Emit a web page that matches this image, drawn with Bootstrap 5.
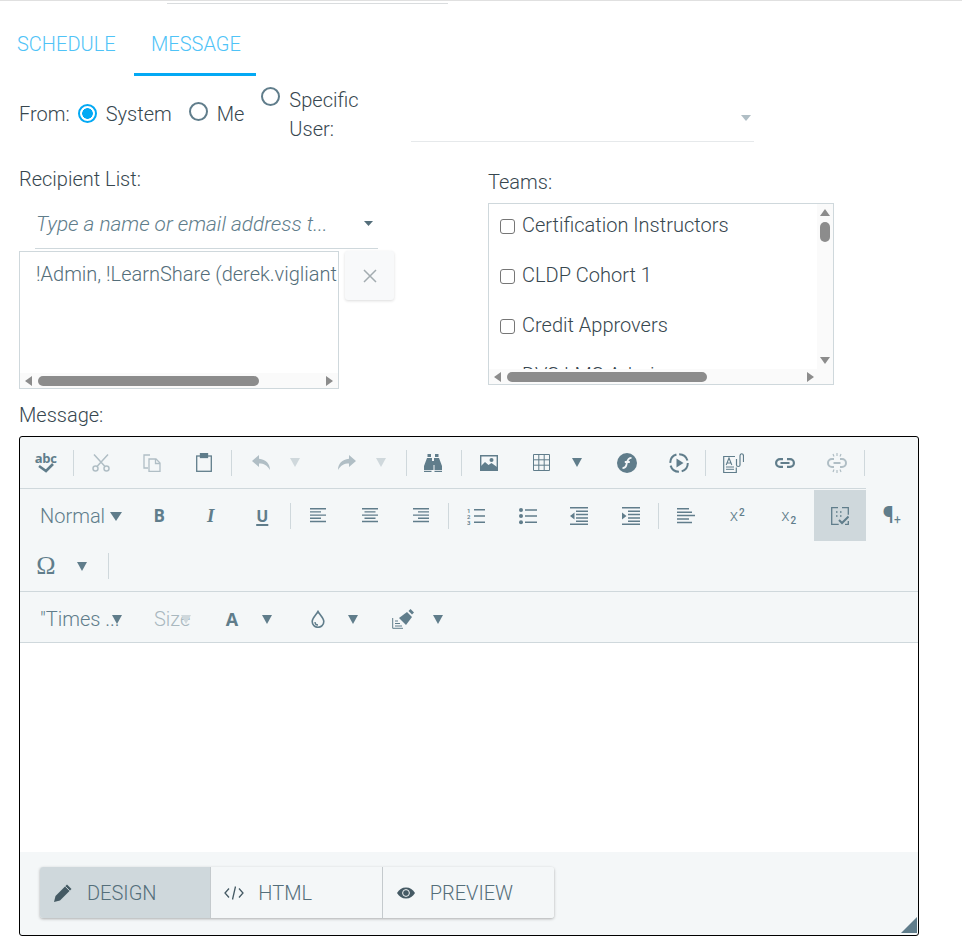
<!DOCTYPE html>
<html lang="en">
<head>
<meta charset="utf-8">
<title>Message</title>
<link href="https://cdn.jsdelivr.net/npm/bootstrap@5.3.0/dist/css/bootstrap.min.css" rel="stylesheet">
<style>
html,body{overflow:hidden}
body{font-family:Roboto,"Liberation Sans",sans-serif;font-weight:300;font-size:20px;line-height:27px;color:#37474f;background:#fff}
.top-rule{height:1px;background:#e0e0e0}
.top-rule2{height:1px;background:#d9dcde;width:281px;margin:2px 0 0 167px}
.tabbar{margin-top:0;height:72px;align-items:flex-end}
.tab-lnk{display:block;height:47px;line-height:30px;color:#4fc3f7;text-decoration:none;text-transform:uppercase;border-bottom:3px solid transparent}
.tab-a{width:134px;padding-left:17px}
.tab-b{width:122px;padding-left:17px;border-bottom-color:#03a9f4}
.from-row{height:89px;padding-left:19px}
.from-lbl{margin-top:25px}
.rd{appearance:none;width:19px;height:19px;margin:0;border:2px solid #607d8b;border-radius:50%;background:#fff;flex:none;display:block}
.rd:checked{border-color:#03a9f4;background:radial-gradient(circle,#03a9f4 0 5px,#fff 5.6px)}
.opt1{margin-left:8px;margin-top:25px}
.opt1 .rd{margin-top:3px}
.opt1 span{margin-left:9px}
.opt2{margin-left:17px;margin-top:25px}
.opt2 .rd{margin-top:1px}
.opt2 span{margin-left:9px}
.opt3{margin-left:17px;margin-top:10px}
.opt3 .rd{margin-top:1px}
.opt3 span{margin-left:9px;width:80px;line-height:29px;color:#37474f}
.user-sel{margin:25px 0 0 42px;width:343px;height:41px;border-bottom:1px solid #e6e9eb;padding-right:3px;padding-top:14px}
.main-cols{height:236px;padding-left:19px}
.left-col{width:469px}
.lbl-text{line-height:29px}
.combo{margin-left:16px;margin-top:10px;width:343px;height:45px;border-bottom:1px solid #cfd8dc;padding:7px 5px 0 1px}
.combo i{color:#607d8b;font-weight:300;font-size:20.8px;white-space:nowrap}
.combo .cr{margin-top:10px}
.list-wrap{margin-top:2px}
.rcpt{width:320px;height:138px;border:1px solid #cfd8dc}
.rcpt-text{height:121px;padding:9px 0 0 16px;white-space:nowrap;overflow:hidden;color:#546e7a}
.close-btn{width:49px;height:49px;margin-left:6px;padding:0;border:0;background:#f8f9fa;border-radius:3px;box-shadow:0 1px 3px rgba(0,0,0,.14);color:#a3acb0}
.hbar{height:15px;background:#fafafa;padding:0 5px;flex:none}
.thumb-h{height:10px;border-radius:5px;background:#8c8c8c}
.thumb-1{width:221px;margin-left:5px}
.thumb-2{width:200px;margin-left:5px}
.arrow-end{margin-right:14px}
.sp{flex:1}
.teams{margin-top:3px}
.teams-box{width:346px;height:182px;margin-top:6px;border:1px solid #cfd8dc}
.teams-main{height:165px}
.teams-list{width:329px;overflow:hidden;padding:0 0 0 11px}
.team-row{height:50px;column-gap:7px}
.team-row:first-child{margin-top:-4px}
.team-row span{line-height:27px}
.team-cb{appearance:none;width:15px;height:15px;margin:0;border:1.4px solid #767676;border-radius:3px;background:#fff;flex:none;transform:translateY(1px)}
.vbar{width:16px;background:#fafafa;padding:5px 0 5px;align-items:center}
.thumb-v{width:10px;height:20px;border-radius:5px;background:#8c8c8c;margin-top:5px}
.msg-lbl{padding-left:19px}
.editor{width:900px;height:500px;margin:6px 0 0 19px;border:1px solid #000;border-radius:3px;background:#f4f7f8;overflow:hidden}
.tb1{height:52px;width:846px;border-bottom:1px solid #cfd8dc}
.tb2{height:52px;padding-top:1px}
.tb3{height:51px;border-bottom:1px solid #cfd8dc}
.tb4{height:51px;border-bottom:1px solid #cfd8dc;padding-top:4px}
.tool{width:51.5px;height:100%;display:flex;align-items:center;justify-content:center;color:#607d8b;flex:none;font-weight:400}
.tb-sep{width:1px;height:26px;background:#cfd8dc;margin-left:2px;margin-right:.5px;flex:none}
.sep-x{margin-left:2px;margin-right:1.5px}
.sep-y{margin-left:1px;margin-right:1.5px}
.sep-z{margin-left:0;margin-right:2.5px}
.spl{width:85.5px;height:100%;display:flex;align-items:center;flex:none;color:#607d8b}
.spl-t{width:86.5px}
.spl .ic{width:52px;display:flex;justify-content:center;flex:none}
.spl .cr{margin-left:5px}
.spl-w .ic{width:56px}
.spl-w .cr{margin-left:1px}
.off,.spl.off,.tool.off{color:#b0bec5}
.cr{display:block;flex:none}
.gly-b{font-family:"Open Sans",Roboto,sans-serif;font-weight:700;font-size:17px;line-height:1}
.gly-i{font-family:"Liberation Serif",serif;font-style:italic;font-weight:700;font-size:19px;line-height:1}
.gly-u{font-family:"Open Sans",Roboto,sans-serif;font-weight:700;font-size:16px;line-height:1;text-decoration:underline;text-underline-offset:2px;text-decoration-thickness:2px}
.gly-s{font-size:17px;font-weight:300;line-height:1}
.gly-s sup,.gly-s sub{font-size:10px;font-weight:500;margin-left:1px}
.active-tool{background:#cfd8dc;margin-left:-.5px;width:52px}
.combo-tool{height:100%;display:flex;align-items:center;flex:none;color:#607d8b;font-size:20px}
.c-normal{width:113.5px;padding-left:20px;padding-top:2px}
.c-normal .cr{margin-left:5px}
.c-times{width:114px;padding-left:20px;white-space:nowrap}
.c-times .cr{margin-left:-8px}
.c-size{width:72px;padding-left:20px;color:#a9b8bf}
.c-size .cr{margin-left:-9px}
.spl4 .ic{width:52px}
.spl4 .cr{margin-left:4px}
.omega{font-family:"Liberation Serif",serif;font-size:26px;line-height:1;font-weight:400}
.a-gly{font-family:"Open Sans",Roboto,sans-serif;font-weight:700;font-size:18px;line-height:1}
.abc-ic{display:flex;flex-direction:column;align-items:center;line-height:1}
.abc-ic b{font-family:"Open Sans",Roboto,sans-serif;font-size:13px;font-weight:700;line-height:10px;letter-spacing:-.3px}
.para-a{font-size:23px;line-height:1;font-weight:400}
.para-b{font-size:12px;line-height:1;margin-top:8px;font-weight:400}
.edit-area{height:209px;background:#fff}
.foot-area{height:84px;padding:15px 0 0 20px;position:relative}
.mode-group{width:514px;height:51px;border-radius:3px;box-shadow:0 1px 3px rgba(0,0,0,.3)}
.mode-btn{width:171.5px;height:100%;display:flex;align-items:center;padding-left:13px;color:#546e7a;background:#f4f7f8;text-transform:uppercase;border-right:1px solid #c4cacd;gap:14px}
.mode-btn span{padding-top:2px}
.mode-btn:first-child{background:#cfd8dc;border-radius:3px 0 0 3px}
.mode-btn:last-child{border-right:0;border-radius:0 3px 3px 0}
.mode-btn svg{flex:none;color:#455a64}
.resizer{position:absolute;right:1px;bottom:3px;display:block}
</style>
</head>
<body>
<div class="top-rule"></div>
<div class="top-rule2"></div>
<nav class="nav tabbar">
  <a class="tab-lnk tab-a" href="#">Schedule</a>
  <a class="tab-lnk tab-b" href="#">Message</a>
</nav>
<div class="d-flex align-items-start from-row">
  <span class="from-lbl">From:</span>
  <label class="d-flex opt1"><input class="rd" type="radio" name="from" checked><span>System</span></label>
  <label class="d-flex opt2"><input class="rd" type="radio" name="from"><span>Me</span></label>
  <label class="d-flex opt3"><input class="rd" type="radio" name="from"><span>Specific User:</span></label>
  <div class="user-sel d-flex justify-content-end">
    <svg class="cr" width="10" height="6" viewBox="0 0 10 6"><path d="M0 0h10L5 6z" fill="#b0bec5"/></svg>
  </div>
</div>
<div class="d-flex main-cols">
  <div class="left-col">
    <div class="lbl-text">Recipient List:</div>
    <div class="combo d-flex justify-content-between align-items-start">
      <i>Type a name or email address t...</i>
      <svg class="cr" width="9" height="5" viewBox="0 0 9 5"><path d="M0 0h9L4.500 5z" fill="#546e7a"/></svg>
    </div>
    <div class="d-flex align-items-start list-wrap">
      <div class="rcpt d-flex flex-column">
        <div class="rcpt-text">!Admin, !LearnShare (derek.vigliant</div>
        <div class="hbar d-flex align-items-center">
          <svg width="8" height="10" viewBox="0 0 8 10"><path d="M0 5l7-5v10z" fill="#8c8c8c"/></svg>
          <div class="thumb-h thumb-1"></div><div class="sp"></div>
          <svg width="8" height="10" viewBox="0 0 8 10"><path d="M8 5L1 0v10z" fill="#8c8c8c"/></svg>
        </div>
      </div>
      <button class="close-btn d-flex align-items-center justify-content-center" type="button" aria-label="Remove">
        <svg width="14" height="14" viewBox="0 0 14 14"><path d="M1 1l12 12M13 1L1 13" stroke="currentColor" stroke-width="1.500" fill="none"/></svg>
      </button>
    </div>
  </div>
  <div class="teams">
    <div class="lbl-text">Teams:</div>
    <div class="teams-box d-flex flex-column">
      <div class="d-flex teams-main">
        <div class="teams-list">
          <label class="d-flex align-items-center team-row"><input class="team-cb" type="checkbox"><span>Certification Instructors</span></label>
          <label class="d-flex align-items-center team-row"><input class="team-cb" type="checkbox"><span>CLDP Cohort 1</span></label>
          <label class="d-flex align-items-center team-row"><input class="team-cb" type="checkbox"><span>Credit Approvers</span></label>
          <label class="d-flex align-items-center team-row"><input class="team-cb" type="checkbox"><span>DVS LMS Admin</span></label>
        </div>
        <div class="vbar d-flex flex-column">
          <svg width="10" height="8" viewBox="0 0 10 8"><path d="M5 0l5 7H0z" fill="#8c8c8c"/></svg>
          <div class="thumb-v"></div><div class="sp"></div>
          <svg width="10" height="8" viewBox="0 0 10 8"><path d="M5 8l5-7H0z" fill="#8c8c8c"/></svg>
        </div>
      </div>
      <div class="hbar d-flex align-items-center">
        <svg width="8" height="10" viewBox="0 0 8 10"><path d="M0 5l7-5v10z" fill="#8c8c8c"/></svg>
        <div class="thumb-h thumb-2"></div><div class="sp"></div>
        <svg class="arrow-end" width="8" height="10" viewBox="0 0 8 10"><path d="M8 5L1 0v10z" fill="#8c8c8c"/></svg>
      </div>
    </div>
  </div>
</div>
<div class="msg-lbl lbl-text">Message:</div>
<div class="editor">
  <div class="d-flex align-items-center tb1">
    <div class="tool"><span class="abc-ic"><b>abc</b><svg width="16" height="10" viewBox="0 0 16 10"><path d="M1 3l7 5 7-7" stroke="currentColor" stroke-width="2.600" fill="none"/></svg></span></div>
    <div class="tb-sep sep-y"></div>
    <div class="tool off"><svg width="18" height="18" viewBox="0 0 18 18" fill="none" stroke="currentColor" stroke-width="1.500"><circle cx="3.500" cy="14.500" r="2.500"/><circle cx="14.500" cy="14.500" r="2.500"/><path d="M5 12.500L16 .5M13 12.500L2 .5"/></svg></div>
    <div class="tool off"><svg width="18" height="18" viewBox="0 0 18 18" fill="none" stroke="currentColor" stroke-width="1.300"><path d="M7 1H1v13h4"/><path d="M6 5h7l4 4v8.400H6z"/><path d="M12.500 5v4.500H17"/></svg></div>
    <div class="tool"><svg width="16" height="19" viewBox="0 0 16 19" fill="none" stroke="currentColor" stroke-width="1.300"><rect x=".7" y="3" width="14.600" height="15.300"/><rect x="4.500" y=".5" width="7" height="4" fill="currentColor"/></svg></div>
    <div class="tb-sep sep-y"></div>
    <div class="spl spl-w off"><span class="ic"><svg width="18" height="15" viewBox="0 0 18 15"><path d="M7 0L0 6l7 6V8.500c5 0 8 1.500 11 6.500 0-6-4-10.500-11-11.200z" fill="currentColor"/></svg></span><svg class="cr" width="10" height="9" viewBox="0 0 10 9"><path d="M0 0h10L5 9z" fill="#cfd8dc"/></svg></div>
    <div class="spl spl-w off"><span class="ic"><svg width="18" height="15" viewBox="0 0 18 15"><path d="M11 0l7 6-7 6V8.500c-5 0-8 1.500-11 6.500 0-6 4-10.500 11-11.200z" fill="currentColor"/></svg></span><svg class="cr" width="10" height="9" viewBox="0 0 10 9"><path d="M0 0h10L5 9z" fill="#cfd8dc"/></svg></div>
    <div class="tb-sep"></div>
    <div class="tool"><svg width="18" height="18" viewBox="0 0 18 18" fill="currentColor"><rect x="3.500" y="0" width="3.500" height="3"/><rect x="11" y="0" width="3.500" height="3"/><path d="M3 4h5v3h2V4h5l3 8v4h-7.500v-5h-1v5H0v-4z"/><rect x="0" y="16.800" width="7.500" height="1.200"/><rect x="10.500" y="16.800" width="7.500" height="1.200"/></svg></div>
    <div class="tb-sep sep-x"></div>
    <div class="tool"><svg width="18" height="16" viewBox="0 0 18 16"><path d="M.7.700h16.600v14.600H.7z" fill="none" stroke="currentColor" stroke-width="1.400"/><path d="M1 15v-4l4-4 3.500 3 3-2 5.500 4v3z" fill="currentColor"/><circle cx="11.500" cy="5" r="2" fill="currentColor"/></svg></div>
    <div class="spl spl-t"><span class="ic"><svg width="17" height="17" viewBox="0 0 17 17" fill="none" stroke="currentColor" stroke-width="1"><path d="M.5.500h16v16H.5zM5.800.5v16M11.200.5v16M.5 5.800h16M.5 11.200h16"/></svg></span><svg class="cr" width="10" height="9" viewBox="0 0 10 9"><path d="M0 0h10L5 9z" fill="currentColor"/></svg></div>
    <div class="tool"><svg width="20" height="20" viewBox="0 0 20 20"><circle cx="10" cy="10" r="10" fill="currentColor"/><path d="M14.500 4.800c-3 0-3.800 1.500-4.500 4.500l-.7 3c-.5 2-1.500 2.800-3.800 2.800M7.800 9h5" stroke="#f3f6f8" stroke-width="1.800" fill="none"/></svg></div>
    <div class="tool"><svg width="20" height="20" viewBox="0 0 20 20"><circle cx="10" cy="10" r="8.800" fill="none" stroke="currentColor" stroke-width="2" stroke-dasharray="11 2.800"/><path d="M7.500 5.500l7 4.500-7 4.500z" fill="currentColor"/></svg></div>
    <div class="tb-sep sep-z"></div>
    <div class="tool"><svg width="21" height="20" viewBox="0 0 21 20" fill="none" stroke="currentColor" stroke-width="1.200"><path d="M12 3.500H.7v16h12.600v-5"/><path d="M3 16.300h8M3 14h8" stroke-width="1"/><path d="M3.200 12L6 5l2.800 7M4.200 10h3.600" stroke-width="1.100"/><path d="M13.500 6v6c0 2 3.500 2 3.500 0V3c0-3 3.500-3 3.500 0v6"/></svg></div>
    <div class="tool"><svg width="20" height="10" viewBox="0 0 20 10" fill="none" stroke="currentColor" stroke-width="2.200"><path d="M8 1.100H5a3.900 3.900 0 000 7.800h3M12 1.100h3a3.900 3.900 0 010 7.800h-3M5.500 5h9"/></svg></div>
    <div class="tool off"><svg width="20" height="20" viewBox="0 0 20 20" fill="none" stroke="currentColor" stroke-width="2"><path d="M7 6H5a4 4 0 000 8h2M13 6h2a4 4 0 010 8h-2M6.500 10h7"/><path d="M10 0v3M6 1l1 2.500M14 1l-1 2.500M10 17v3M6 19l1-2.500M14 19l-1-2.500" stroke-width="1.200"/></svg></div>
    <div class="tb-sep sep-y"></div>
  </div>
  <div class="d-flex align-items-center tb2">
    <div class="combo-tool c-normal"><span>Normal</span><svg class="cr" width="12" height="9" viewBox="0 0 12 9"><path d="M0 0h12L6 9z" fill="currentColor"/></svg></div>
    <div class="tool"><span class="gly-b">B</span></div>
    <div class="tool"><span class="gly-i">I</span></div>
    <div class="tool"><span class="gly-u">U</span></div>
    <div class="tb-sep sep-x"></div>
    <div class="tool"><svg width="16" height="15" viewBox="0 0 16 15" fill="currentColor"><path d="M0 0h16v1.400H0zM0 3.200h11v1.400H0zM0 6.400h16v1.400H0zM0 9.600h11v1.400H0zM0 12.800h16v1.400H0z"/></svg></div>
    <div class="tool"><svg width="16" height="15" viewBox="0 0 16 15" fill="currentColor"><path d="M0 0h16v1.400H0zM2.500 3.200h11v1.400h-11zM0 6.400h16v1.400H0zM2.500 9.600h11v1.400h-11zM0 12.800h16v1.400H0z"/></svg></div>
    <div class="tool"><svg width="16" height="15" viewBox="0 0 16 15" fill="currentColor"><path d="M0 0h16v1.400H0zM5 3.200h11v1.400H5zM0 6.400h16v1.400H0zM5 9.600h11v1.400H5zM0 12.800h16v1.400H0z"/></svg></div>
    <div class="tb-sep sep-y"></div>
    <div class="tool"><svg width="18" height="18" viewBox="0 0 18 18"><path d="M7 2h11v1.500H7zM7 8.300h11v1.500H7zM7 14.500h11V16H7z" fill="currentColor"/><text x="0" y="5.500" font-size="6" font-weight="600" font-family="Roboto,sans-serif" fill="currentColor">1</text><text x="0" y="11.500" font-size="6" font-weight="600" font-family="Roboto,sans-serif" fill="currentColor">2</text><text x="0" y="17.500" font-size="6" font-weight="600" font-family="Roboto,sans-serif" fill="currentColor">3</text></svg></div>
    <div class="tool"><svg width="18" height="18" viewBox="0 0 18 18" fill="currentColor"><circle cx="2" cy="3" r="2"/><circle cx="2" cy="9" r="2"/><circle cx="2" cy="15.300" r="2"/><path d="M6 2.200h12v1.500H6zM6 8.300h12v1.500H6zM6 14.500h12V16H6z"/></svg></div>
    <div class="tool"><svg width="18" height="18" viewBox="0 0 18 18" fill="currentColor"><path d="M0 0h18v1.500H0zM6 3.400h12v1.500H6zM6 6.800h12v1.500H6zM6 10.200h12v1.500H6zM6 13.400h12v1.500H6zM0 16.500h18V18H0zM4.500 5.500v7L0 9z"/></svg></div>
    <div class="tool"><svg width="18" height="18" viewBox="0 0 18 18" fill="currentColor"><path d="M0 0h18v1.500H0zM6 3.400h12v1.500H6zM6 6.800h12v1.500H6zM6 10.200h12v1.500H6zM6 13.400h12v1.500H6zM0 16.500h18V18H0zM0 5.500v7L4.500 9z"/></svg></div>
    <div class="tb-sep sep-y"></div>
    <div class="tool"><svg width="18" height="16" viewBox="0 0 18 16" fill="currentColor"><path d="M0 0h12v1.500H0zM0 3.400h15v1.500H0zM0 6.800h18v1.500H0zM0 10.200h12v1.500H0zM0 13.800h15v1.500H0z"/></svg></div>
    <div class="tool"><span class="gly-s">x<sup>2</sup></span></div>
    <div class="tool"><span class="gly-s">x<sub>2</sub></span></div>
    <div class="tool active-tool"><svg width="18" height="18" viewBox="0 0 18 18" fill="none" stroke="currentColor" stroke-width="1.300"><path d="M7 .7H.7v16.600h7M11 .7h6.300v7M17.300 14v3.300H14"/><path d="M8 13l3 3 6.500-6.500" stroke-width="2"/><path d="M5 5h1.500M5 9h1.500M9 5h1.500M9 9h1.500" stroke-width="1.500"/></svg></div>
    <div class="tool"><span class="para-a">¶</span><span class="para-b">+</span></div>
  </div>
  <div class="d-flex align-items-center tb3">
    <div class="spl"><span class="ic"><span class="omega">Ω</span></span><svg class="cr" width="10" height="9" viewBox="0 0 10 9"><path d="M0 0h10L5 9z" fill="currentColor"/></svg></div>
    <div class="tb-sep"></div>
  </div>
  <div class="d-flex align-items-center tb4">
    <div class="combo-tool c-times"><span>"Times ...</span><svg class="cr" width="10" height="9" viewBox="0 0 10 9"><path d="M0 0h10L5 9z" fill="currentColor"/></svg></div>
    <div class="combo-tool c-size"><span>Size</span><svg class="cr" width="10" height="9" viewBox="0 0 10 9"><path d="M0 0h10L5 9z" fill="#cfd8dc"/></svg></div>
    <div class="spl spl4"><span class="ic"><span class="a-gly">A</span></span><svg class="cr" width="10" height="9" viewBox="0 0 10 9"><path d="M0 0h10L5 9z" fill="currentColor"/></svg></div>
    <div class="spl spl4"><span class="ic"><svg width="14" height="18" viewBox="0 0 14 18" fill="none" stroke="currentColor" stroke-width="1.600"><path d="M7 1.500C5 5 1.200 8 1.200 11.500a5.800 5.800 0 0011.600 0C12.800 8 9 5 7 1.500z"/><path d="M4 12a3 3 0 003 3" stroke-width="1.300"/></svg></span><svg class="cr" width="10" height="9" viewBox="0 0 10 9"><path d="M0 0h10L5 9z" fill="currentColor"/></svg></div>
    <div class="spl spl4"><span class="ic"><svg width="22" height="20" viewBox="0 0 22 20"><path d="M7 9l8-6 5 5-6 8z" fill="currentColor"/><path d="M16.500 2l2-2 3.500 3.500-2 2z" fill="currentColor"/><path d="M.7 9v10.300H11M3 12h3M3 14.500h5M3 17h7" stroke="currentColor" fill="none" stroke-width="1"/></svg></span><svg class="cr" width="10" height="9" viewBox="0 0 10 9"><path d="M0 0h10L5 9z" fill="currentColor"/></svg></div>
  </div>
  <div class="edit-area"></div>
  <div class="foot-area">
    <div class="mode-group d-flex">
      <div class="mode-btn"><svg width="20" height="20" viewBox="0 0 20 20"><path d="M14 1.500l4.500 4.500L7 17.500l-6 1.500 1.500-6z" fill="currentColor"/><path d="M12.200 3.300l4.500 4.500" stroke="#cfd8dc" stroke-width="1"/></svg><span>Design</span></div>
      <div class="mode-btn"><svg width="20" height="14" viewBox="0 0 20 14" fill="none" stroke="currentColor" stroke-width="1.300"><path d="M5 2.500L1 7l4 4.500M15 2.500L19 7l-4 4.500M11.500 .5l-3 13"/></svg><span>HTML</span></div>
      <div class="mode-btn"><svg width="20" height="14" viewBox="0 0 20 14"><path d="M1 7c2-3.500 5-5.500 9-5.500s7 2 9 5.500c-2 3.500-5 5.500-9 5.500S3 10.500 1 7z" fill="currentColor"/><circle cx="10" cy="7" r="3.400" fill="none" stroke="#f4f7f8" stroke-width="1"/></svg><span>Preview</span></div>
    </div>
    <svg class="resizer" width="16" height="16" viewBox="0 0 16 16"><path d="M16 0v16H0z" fill="#607d8b"/></svg>
  </div>
</div>
<script src="https://cdn.jsdelivr.net/npm/bootstrap@5.3.0/dist/js/bootstrap.bundle.min.js"></script>
</body>
</html>
